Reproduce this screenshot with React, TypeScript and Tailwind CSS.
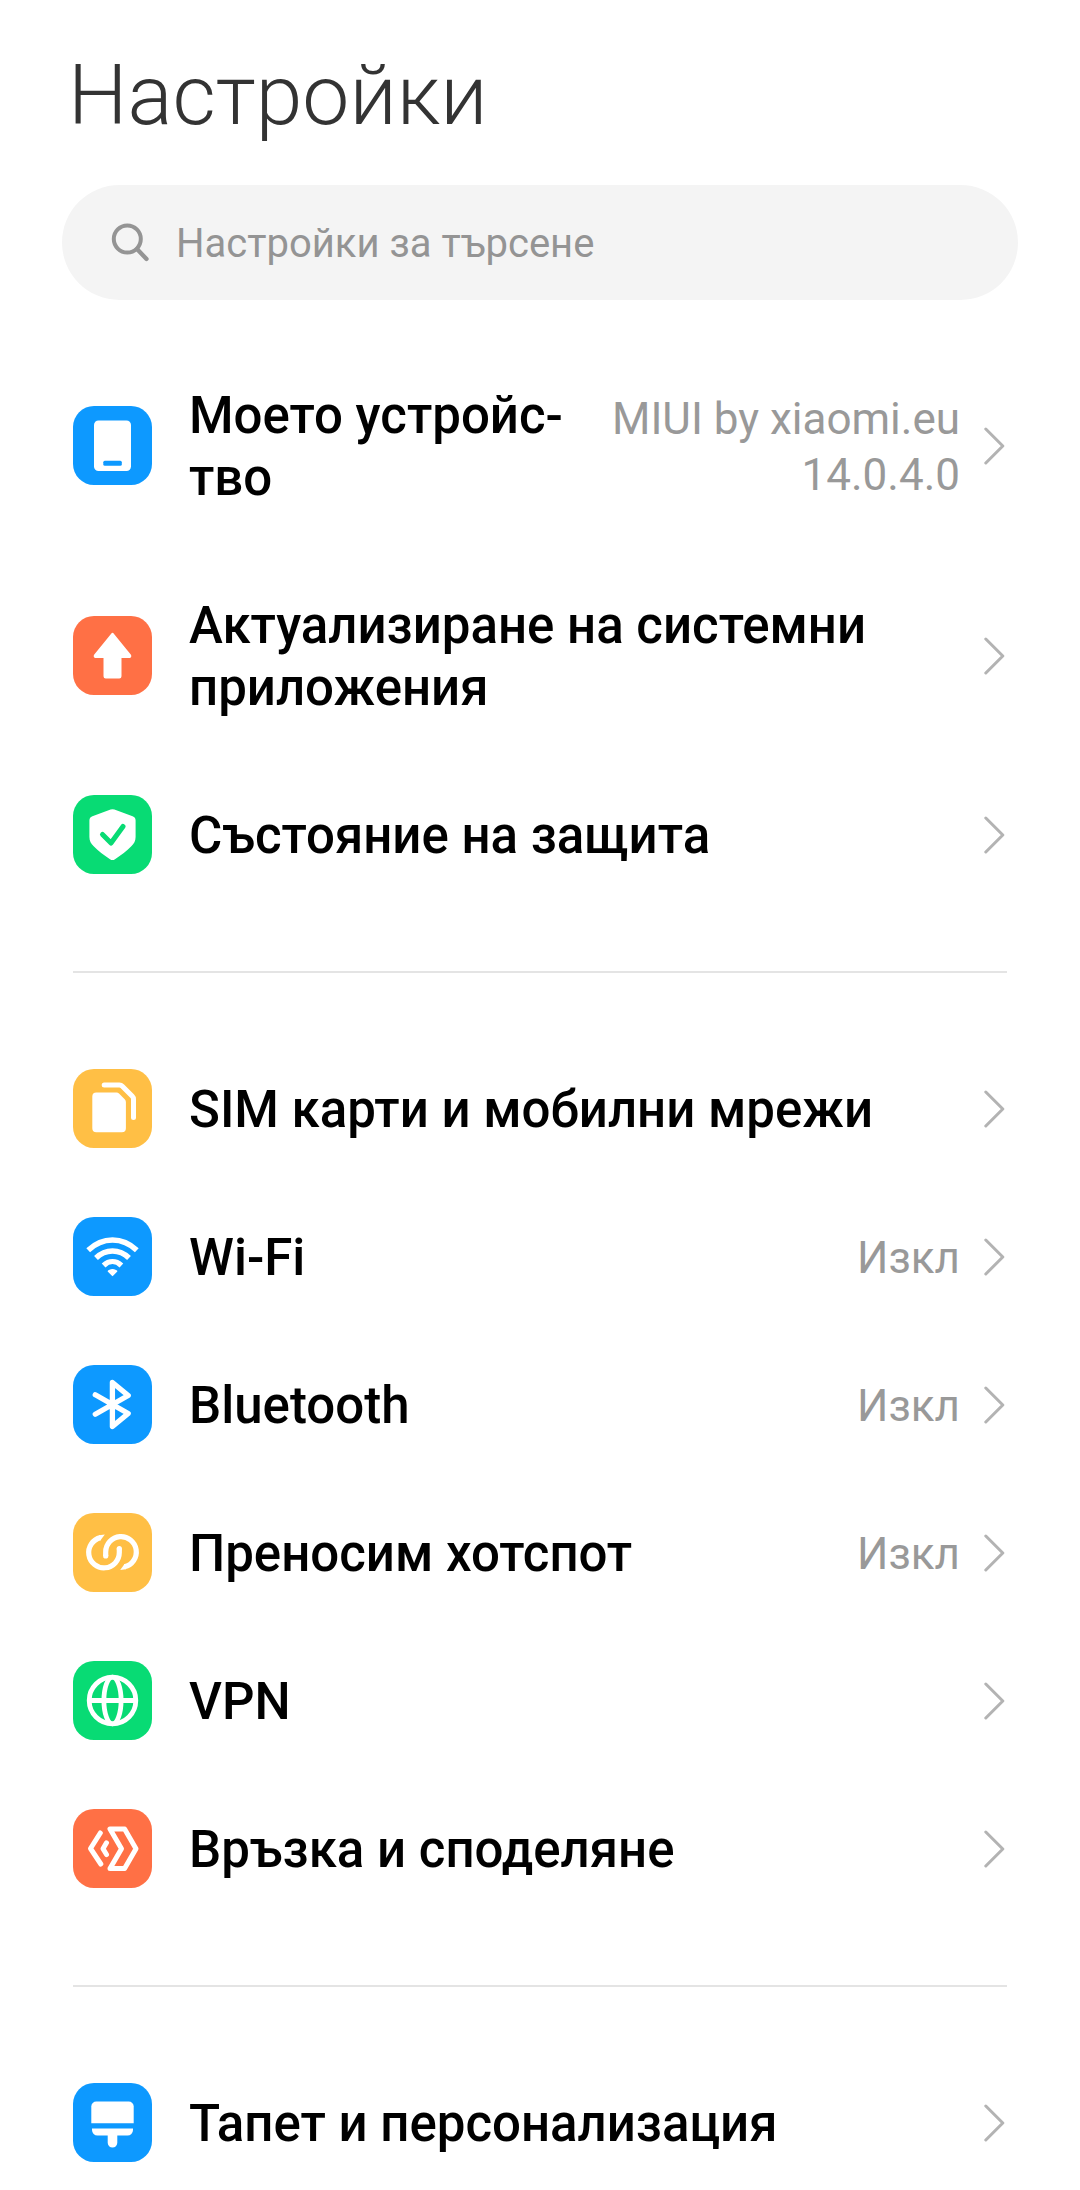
import type { ReactNode } from 'react'

type Item = {
  title: string
  value?: string
  icon: ReactNode
  color: string
}

const BLUE = 'bg-[#0d99ff]'
const ORANGE = 'bg-[#ff7045]'
const GREEN = 'bg-[#08db74]'
const YELLOW = 'bg-[#ffbf45]'

const stroke = {
  fill: 'none',
  stroke: 'currentColor',
  strokeLinecap: 'round' as const,
  strokeLinejoin: 'round' as const,
}

// Tile icons, all drawn on a 79x79 grid.
const phone = (
  <>
    <rect x="21" y="14.5" width="37" height="50.5" rx="4.5" />
    <rect x="30.3" y="54.7" width="18.5" height="5" rx="1.5" fill="#0d99ff" />
  </>
)

const arrow = (
  <path
    d="M39.5 18 57 39.6a.8.8 0 0 1-.6 1.2H47.3V60.2a1 1 0 0 1-1 1H32.7a1 1 0 0 1-1-1V40.8H22.6a.8.8 0 0 1-.6-1.2Z"
    stroke="currentColor"
    strokeWidth="2.4"
    strokeLinejoin="round"
  />
)

const shield = (
  <>
    <path d="M37.6 14.6a5 5 0 0 1 3.8 0L59.6 21.2a4.5 4.5 0 0 1 3 4.2V42c0 4-1.6 6.8-4.3 9.3C53.5 56 48.5 60 42 64.2a4.5 4.5 0 0 1-5 0C30.5 60 25.5 56 20.7 51.3 18 48.8 16.4 46 16.4 42V25.4a4.5 4.5 0 0 1 3-4.2Z" />
    <path d="m29.5 39.5 8.5 8.5L50 31.5" {...stroke} stroke="#08db74" strokeWidth="5" />
  </>
)

const sim = (
  <>
    <path d="M23.3 23.5H43.5a3.5 3.5 0 0 1 2.5 1L51.7 30.3a4 4 0 0 1 1.2 2.8V59.2a4 4 0 0 1-4 4H23.3a4 4 0 0 1-4-4V27.5a4 4 0 0 1 4-4Z" />
    <path d="M31.2 16H46.5a4 4 0 0 1 2.8 1.2L59.3 27.2A4 4 0 0 1 60.5 30V48.5" {...stroke} strokeWidth="5" />
  </>
)

const wifi = (
  <>
    <path
      d="M15.2 33.2C29.5 19.5 49.5 19.5 63.8 33.2M23 41C32.5 31.6 46.5 31.6 56 41M30.6 48.4C36 43.4 43 43.4 48.4 48.4"
      {...stroke}
      strokeWidth="5.4"
      strokeLinecap="butt"
    />
    <path
      d="M39.5 58.3 35.5 54.2C37.7 52.3 41.3 52.3 43.5 54.2Z"
      stroke="currentColor"
      strokeWidth="1.6"
      strokeLinejoin="round"
    />
  </>
)

const bluetooth = (
  <path d="M22.3 29.8 55.2 48.5 39.4 61.5V17.5L55.2 30.5 22.3 49.2" {...stroke} strokeWidth="5.3" />
)

const ringHalf = (
  <>
    <path d="M27.5 24.6A15.3 15.3 0 1 0 46.3 39.5V35.5" {...stroke} strokeWidth="5.2" strokeLinecap="butt" />
    <circle cx="46.3" cy="35.5" r="2.6" />
    <path d="M26 22.2 31.8 21.5 27.5 27.3Z" />
  </>
)

const hotspot = (
  <>
    {ringHalf}
    <g transform="rotate(180 39.5 39.2)">{ringHalf}</g>
  </>
)

const globe = (
  <g {...stroke} strokeWidth="4.8">
    <circle cx="39.5" cy="39.5" r="23.3" />
    <ellipse cx="39.5" cy="39.5" rx="8.6" ry="23.3" />
    <path d="M16.5 39.5H62.5" />
  </g>
)

const share = (
  <g {...stroke} strokeWidth="5">
    <path d="M27.3 24 17.5 39.5 27.8 55" />
    <path d="M33.5 33.8 30 39.7 33.5 45.5" />
    <path d="M37 20H51.6L63 39.8 51.6 59.6H37L48.5 39.8Z" />
  </g>
)

const brush = (
  <>
    <path d="M23.3 18.5H55.7a5 5 0 0 1 5 5V40.3H18.3V23.5a5 5 0 0 1 5-5Z" />
    <path d="M19 45.5H60V47a5.5 5.5 0 0 1-5.5 5.5H44.3V59.8a4.8 4.8 0 0 1-9.6 0V52.5H24.5A5.5 5.5 0 0 1 19 47Z" />
  </>
)

const groups: Item[][] = [
  [
    { title: 'Моето устройс\u00ADтво', value: 'MIUI by xiaomi.eu 14.0.4.0', icon: phone, color: BLUE },
    { title: 'Актуализиране на системни приложения', icon: arrow, color: ORANGE },
    { title: 'Състояние на защита', icon: shield, color: GREEN },
  ],
  [
    { title: 'SIM карти и мобилни мрежи', icon: sim, color: YELLOW },
    { title: 'Wi-Fi', value: 'Изкл', icon: wifi, color: BLUE },
    { title: 'Bluetooth', value: 'Изкл', icon: bluetooth, color: BLUE },
    { title: 'Преносим хотспот', value: 'Изкл', icon: hotspot, color: YELLOW },
    { title: 'VPN', icon: globe, color: GREEN },
    { title: 'Връзка и споделяне', icon: share, color: ORANGE },
  ],
  [{ title: 'Тапет и персонализация', icon: brush, color: BLUE }],
]

function Chevron() {
  return (
    <svg viewBox="0 0 23 40" className="ml-6 h-10 w-[23px] shrink-0 text-[#b3b3b3]" aria-hidden="true">
      <path d="M1.8 4 18.8 21 1.8 38" {...stroke} strokeWidth="3" />
    </svg>
  )
}

function SettingsRow({ item }: { item: Item }) {
  return (
    <li>
      <a href="#" className="flex items-center">
        <span className={`size-[79px] shrink-0 overflow-hidden rounded-[21px] text-white ${item.color}`}>
          <svg viewBox="0 0 79 79" fill="currentColor" className="size-full" aria-hidden="true">
            {item.icon}
          </svg>
        </span>
        <span className="ml-[37px] min-w-0 flex-1 pt-[45px] pb-[41px] text-[51px] leading-[62px] font-medium text-black">
          {item.title}
        </span>
        {item.value && (
          <span className="ml-8 max-w-[360px] shrink-0 pt-1 text-right text-[44px] leading-[56px] text-[#999999]">
            {item.value}
          </span>
        )}
        <Chevron />
      </a>
    </li>
  )
}

export default function App() {
  return (
    <main className="bg-white pt-10 font-[Roboto,'Noto_Sans',sans-serif]">
      <h1 className="px-[68px] text-[84px] leading-[112px] font-light text-[#333333]">Настройки</h1>
      <label className="mx-[62px] mt-[33px] flex h-[115px] items-center rounded-full bg-[#f4f4f4] pl-12">
        <svg viewBox="0 0 40 40" className="size-10 shrink-0 text-[#949494]" aria-hidden="true">
          <circle cx="17.3" cy="16" r="13.5" {...stroke} strokeWidth="4" />
          <path d="M27 26 36.5 36" {...stroke} strokeWidth="4.3" />
        </svg>
        <input
          type="search"
          aria-label="Настройки за търсене"
          placeholder="Настройки за търсене"
          className="ml-[26px] min-w-0 flex-1 bg-transparent pt-0.5 text-[40px] text-[#333333] outline-none placeholder:text-[#949494]"
        />
      </label>
      <nav className="mt-10 px-[73px]">
        {groups.map((items, i) => (
          <div key={i}>
            {i > 0 && <hr className="mt-[63px] mb-[61px] border-t-2 border-[#e4e4e4]" />}
            <ul>
              {items.map((item) => (
                <SettingsRow key={item.title} item={item} />
              ))}
            </ul>
          </div>
        ))}
      </nav>
    </main>
  )
}
